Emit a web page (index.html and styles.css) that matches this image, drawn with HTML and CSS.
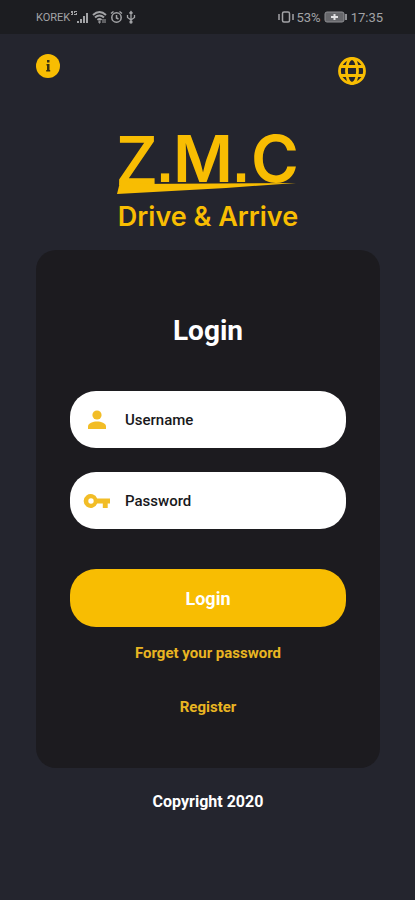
FILE: index.html
```html
<!DOCTYPE html>
<html lang="en">
<head>
<meta charset="utf-8">
<meta name="viewport" content="width=device-width, initial-scale=1">
<title>Z.M.C Login</title>
<link rel="stylesheet" href="styles.css">
</head>
<body>
<div class="status">
  <div class="status-group">
    <span class="carrier">KOREK</span>
    <svg width="19" height="14" viewBox="0 0 19 14" fill="currentColor" aria-hidden="true"><path d="M1 1h2v4H1V4h1V3H1zM4 1h3v1H5v1h2v2H4V4h2V3H4zM7 11h2v2H7zM10 9h2v4h-2zM13 6h2v7h-2zM16 3h2v10h-2z"/></svg>
    <svg class="wifi" width="15" height="14" viewBox="0 0 15 14" fill="none" stroke="currentColor" stroke-width="2" aria-hidden="true"><path d="M1 5Q7.500-1 14 5M3 7.500q4.500-4 9 0M5.500 10q2-2 4 0"/><path d="M7 11h1v2H7zM11 9v4M13 9v4" stroke-width="1"/></svg>
    <svg width="13" height="14" viewBox="0 0 13 14" fill="none" stroke="currentColor" stroke-width="1.500" aria-hidden="true"><circle cx="6.500" cy="7.500" r="4.700"/><path d="M1 3.500 3.500 1.500M12 3.500 9.500 1.500M6.500 5v3l2 1"/></svg>
    <svg class="usb" width="10" height="14" viewBox="0 0 10 14" fill="none" stroke="currentColor" stroke-width="1.300" aria-hidden="true"><path d="M5 12V2M3.500 3.500 5 1.500l1.500 2M1.500 5v2.500L5 10l3.500-2.500V5"/><circle cx="5" cy="12" r="1" fill="currentColor"/></svg>
  </div>
  <div class="status-group">
    <svg class="vibrate" width="16" height="14" viewBox="0 0 16 14" fill="none" stroke="currentColor" stroke-width="1.500" aria-hidden="true"><rect x="4.500" y="2" width="7" height="10" rx="1.500"/><path d="M1 4v6M15 4v6"/></svg>
    <span>53%</span>
    <svg class="battery" width="24" height="14" viewBox="0 0 24 14" aria-hidden="true"><rect x="1" y="2" width="19" height="10" rx="2" fill="#66676b" stroke="#8e8f93"/><path d="M22 4v6" stroke="#8e8f93" stroke-width="2"/><path d="M7 7h7M10.500 4v6" stroke="#e2e2e4" stroke-width="2"/></svg>
    <span>17:35</span>
  </div>
</div>
<main class="page">
  <nav class="tools">
    <button class="tool" type="button" aria-label="Information"><svg width="24" height="24" viewBox="0 0 24 24" aria-hidden="true"><circle cx="12" cy="12" r="12" fill="#f8bd02"/><path d="M11 6h2.500v2.500H11zM10.500 10h3v6h.700v1.500h-4V16h.800v-4.500h-.500z" fill="#3a3011"/></svg></button>
    <button class="tool tool-language" type="button" aria-label="Language"><svg width="28" height="28" viewBox="0 0 28 28" fill="none" stroke="#f8bd02" stroke-width="2.800" aria-hidden="true"><circle cx="14" cy="14" r="12.500"/><ellipse cx="14" cy="14" rx="5.500" ry="12.500"/><path d="M2.500 9.500h23M2.500 18.500h23"/></svg></button>
  </nav>
  <header class="brand">
    <svg class="logo" width="184" height="66" viewBox="0 0 184 66" fill="#f8bd02" role="img" aria-label="Z.M.C">
      <text class="letter letter-z" x="1" y="52">Z</text>
      <text class="dot" x="41" y="49">.</text>
      <text class="letter" x="57" y="49">M</text>
      <text class="dot" x="117" y="49">.</text>
      <text class="letter" x="135" y="49">C</text>
      <path d="M5 45 18 51 180 50 110 55 1 61z"/>
    </svg>
    <p class="tagline">Drive &amp; Arrive</p>
  </header>
  <form class="card">
    <h1 class="title">Login</h1>
    <label class="field">
      <svg width="28" height="28" viewBox="0 0 28 28" fill="#f2bd27" aria-hidden="true"><circle cx="14" cy="9" r="4.600"/><path d="M5 23v-2.500C5 17 10 15.500 14 15.500s9 1.500 9 5V23z"/></svg>
      <input type="text" placeholder="Username" aria-label="Username">
    </label>
    <label class="field">
      <svg width="28" height="28" viewBox="0 0 28 28" fill="#f2bd27" aria-hidden="true"><path fill-rule="evenodd" d="M14.200 11.500H27v5h-2.300V21h-4.900v-4.500h-5.600a7 7 0 1 1 0-5zM8 11.300a2.700 2.700 0 1 0 0 5.400 2.700 2.700 0 0 0 0-5.400z"/></svg>
      <input type="password" placeholder="Password" aria-label="Password">
    </label>
    <button class="submit" type="submit">Login</button>
    <a class="link" href="#">Forget your password</a>
    <a class="link link-register" href="#">Register</a>
  </form>
  <footer class="copyright">Copyright 2020</footer>
</main>
</body>
</html>
```
FILE: styles.css
```css
* { box-sizing: border-box; }
body {
  margin: 0;
  min-height: 100vh;
  background: #24252e;
  color: #fff;
  font-family: Roboto, "Liberation Sans", sans-serif;
}
button, input { font: inherit; }
svg { display: block; flex: none; }
.status {
  display: flex;
  justify-content: space-between;
  align-items: center;
  height: 34px;
  padding: 0 32px 0 36px;
  background: #1c1d21;
  color: #a2a3a6;
  font-size: 13px;
}
.status-group { display: flex; align-items: center; }
.carrier { font-size: 11px; }
.wifi { margin: 0 3px; }
.usb { margin-left: 3px; }
.vibrate { margin-right: 2px; }
.battery { margin: 0 3px; }
.page { padding: 20px 35px 24px 36px; }
.tools {
  display: flex;
  justify-content: space-between;
  padding: 0 14px 0 0;
}
.tool {
  height: 24px;
  padding: 0;
  border: 0;
  background: none;
}
.tool-language { height: 28px; margin-top: 3px; }
.brand {
  display: flex;
  flex-direction: column;
  align-items: center;
  padding-top: 48px;
}
.logo { overflow: visible; }
.letter {
  font-family: Inter, sans-serif;
  font-size: 65px;
  font-weight: 600;
}
.letter-z {
  font-family: "Open Sans", sans-serif;
  font-size: 69px;
}
.dot {
  font-family: "Liberation Sans", sans-serif;
  font-size: 58px;
  font-weight: 700;
}
.tagline {
  margin: 2px 0 17px;
  color: #f8bd02;
  font-family: Inter, sans-serif;
  font-size: 27px;
  font-weight: 600;
  line-height: 32px;
}
.card {
  display: flex;
  flex-direction: column;
  gap: 24px;
  padding: 65px 34px 51px;
  border-radius: 20px;
  background: #1c1b1f;
}
.title {
  margin: 0 0 20px;
  font-size: 28px;
  line-height: 32px;
  text-align: center;
}
.field {
  display: flex;
  align-items: center;
  gap: 14px;
  height: 57px;
  padding: 0 13px;
  border-radius: 26px;
  background: #fff;
}
.field input {
  flex: 1;
  min-width: 0;
  padding: 0;
  border: 0;
  outline: 0;
  background: none;
  color: #18181b;
  font-size: 15px;
  font-weight: 500;
}
.field input::placeholder { color: #18181b; opacity: 1; }
.submit {
  height: 58px;
  margin-top: 16px;
  border: 0;
  border-radius: 26px;
  background: #f8bd02;
  color: #fff;
  font-size: 18px;
  font-weight: 700;
}
.link {
  align-self: center;
  margin-top: -8px;
  color: #e9b522;
  font-size: 15px;
  font-weight: 700;
  line-height: 20px;
  text-decoration: none;
}
.link-register { margin-top: 10px; }
.copyright {
  padding-top: 24px;
  font-size: 16px;
  font-weight: 700;
  line-height: 20px;
  text-align: center;
}
```
